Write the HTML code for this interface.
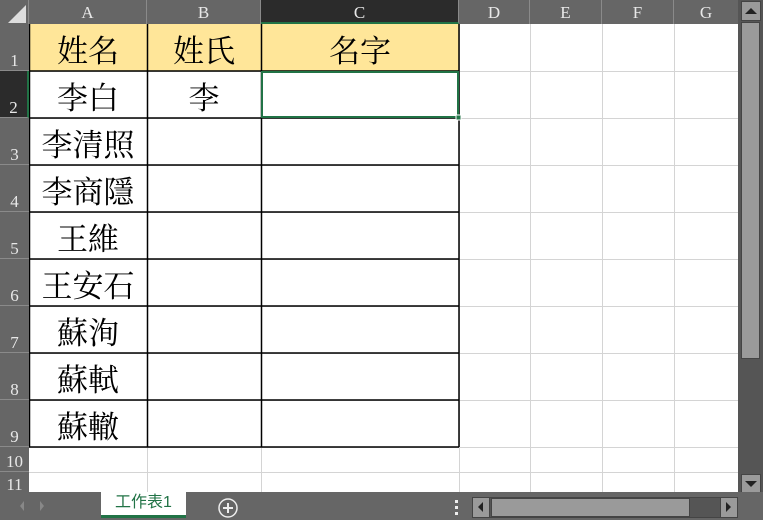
<!DOCTYPE html>
<html><head><meta charset="utf-8"><style>
*{margin:0;padding:0;box-sizing:border-box}
body{width:763px;height:520px;overflow:hidden;background:#666;position:relative;font-family:"Liberation Serif",serif}
.a{position:absolute}
.ch{position:absolute;top:0;height:24px;background:#666;color:#e8e8e8;font-size:17px;text-align:center;line-height:26px;border-right:1px solid #8a8a8a}
.rh{position:absolute;left:0;width:29px;background:#666;color:#e8e8e8;font-size:17px;text-align:center;border-bottom:1px solid #8a8a8a;display:flex;align-items:flex-end;justify-content:center;line-height:18px}
.t{position:absolute;font-family:"Noto Serif CJK SC","Noto Serif CJK TC",serif;font-size:31px;color:#000;text-align:center;line-height:49px;height:47px}
</style></head><body>
<div class="a" style="left:29px;top:24px;width:709px;height:468px;background:#fff"></div>
<svg class="a" style="left:0;top:0" width="763" height="520">
<g stroke="#d4d4d4" stroke-width="1">
<line x1="459.5" y1="24" x2="459.5" y2="492"/><line x1="530.5" y1="24" x2="530.5" y2="492"/><line x1="602.5" y1="24" x2="602.5" y2="492"/><line x1="674.5" y1="24" x2="674.5" y2="492"/>
<line x1="147.5" y1="447" x2="147.5" y2="492"/><line x1="261.5" y1="447" x2="261.5" y2="492"/>
<line x1="29" y1="71.5" x2="738" y2="71.5"/><line x1="29" y1="118.5" x2="738" y2="118.5"/><line x1="29" y1="165.5" x2="738" y2="165.5"/><line x1="29" y1="212.5" x2="738" y2="212.5"/><line x1="29" y1="259.5" x2="738" y2="259.5"/><line x1="29" y1="306.5" x2="738" y2="306.5"/><line x1="29" y1="353.5" x2="738" y2="353.5"/><line x1="29" y1="400.5" x2="738" y2="400.5"/><line x1="29" y1="447.5" x2="738" y2="447.5"/><line x1="29" y1="472.5" x2="738" y2="472.5"/>
</g>
<rect x="30" y="24" width="429" height="47" fill="#ffe699"/>
<g stroke="#000" stroke-width="1.5">
<line x1="29.5" y1="24" x2="29.5" y2="447"/><line x1="147.5" y1="24" x2="147.5" y2="447"/><line x1="261.5" y1="24" x2="261.5" y2="447"/><line x1="459" y1="24" x2="459" y2="447"/>
<line x1="29" y1="71" x2="459" y2="71"/><line x1="29" y1="118" x2="459" y2="118"/><line x1="29" y1="165" x2="459" y2="165"/><line x1="29" y1="212" x2="459" y2="212"/><line x1="29" y1="259" x2="459" y2="259"/><line x1="29" y1="306" x2="459" y2="306"/><line x1="29" y1="353" x2="459" y2="353"/><line x1="29" y1="400" x2="459" y2="400"/><line x1="29" y1="447" x2="459" y2="447"/>
</g>
<rect x="262" y="72" width="196" height="45" fill="none" stroke="#217346" stroke-width="2"/>
<rect x="456" y="115" width="5" height="5" fill="#217346" stroke="#fff" stroke-width="1"/>
</svg>
<div class="ch" style="left:0;width:29px"></div>
<svg class="a" style="left:8px;top:5px" width="18" height="18"><polygon points="18,0 18,18 0,18" fill="#ddd"/></svg>
<div class="ch" style="left:29px;width:118px">A</div>
<div class="ch" style="left:147px;width:114px">B</div>
<div class="ch" style="left:261px;width:198px;background:#2b2b2b;border-bottom:2px solid #217346">C</div>
<div class="ch" style="left:459px;width:71px">D</div>
<div class="ch" style="left:530px;width:72px">E</div>
<div class="ch" style="left:602px;width:72px">F</div>
<div class="ch" style="left:674px;width:64px;border-right:none">G</div>
<div class="rh" style="top:24px;height:47px">1</div>
<div class="rh" style="top:71px;height:47px;background:#2b2b2b;border-right:2px solid #217346">2</div>
<div class="rh" style="top:118px;height:47px">3</div>
<div class="rh" style="top:165px;height:47px">4</div>
<div class="rh" style="top:212px;height:47px">5</div>
<div class="rh" style="top:259px;height:47px">6</div>
<div class="rh" style="top:306px;height:47px">7</div>
<div class="rh" style="top:353px;height:47px">8</div>
<div class="rh" style="top:400px;height:47px">9</div>
<div class="rh" style="top:447px;height:25px">10</div>
<div class="rh" style="top:472px;height:20px;border-bottom:none;overflow:hidden;align-items:flex-start;padding-top:4px">11</div>
<div class="t" style="left:29px;top:24px;width:118px">姓名</div>
<div class="t" style="left:147px;top:24px;width:114px">姓氏</div>
<div class="t" style="left:261px;top:24px;width:198px">名字</div>
<div class="t" style="left:29px;top:71px;width:118px">李白</div>
<div class="t" style="left:147px;top:71px;width:114px">李</div>
<div class="t" style="left:29px;top:118px;width:118px">李清照</div>
<div class="t" style="left:29px;top:165px;width:118px">李商隱</div>
<div class="t" style="left:29px;top:212px;width:118px">王維</div>
<div class="t" style="left:29px;top:259px;width:118px">王安石</div>
<div class="t" style="left:29px;top:306px;width:118px">蘇洵</div>
<div class="t" style="left:29px;top:353px;width:118px">蘇軾</div>
<div class="t" style="left:29px;top:400px;width:118px">蘇轍</div>
<div class="a" style="left:738px;top:0;width:25px;height:492px;background:#555"></div>
<div class="a" style="left:741px;top:1px;width:20px;height:20px;background:#9a9a9a;border:1px solid #444"></div>
<svg class="a" style="left:745px;top:8px" width="12" height="6"><polygon points="6,0 12,6 0,6" fill="#222"/></svg>
<div class="a" style="left:741px;top:22px;width:19px;height:337px;background:#9a9a9a;border:1px solid #444"></div>
<div class="a" style="left:741px;top:474px;width:20px;height:19px;background:#9a9a9a;border:1px solid #444"></div>
<svg class="a" style="left:745px;top:481px" width="12" height="6"><polygon points="0,0 12,0 6,6" fill="#222"/></svg>
<div class="a" style="left:0;top:492px;width:763px;height:28px;background:#666"></div>
<svg class="a" style="left:18px;top:499px" width="30" height="14"><polygon points="6,2 2,7 6,12" fill="#888"/><polygon points="22,2 26,7 22,12" fill="#888"/></svg>
<div class="a" style="left:101px;top:492px;width:85px;height:26px;background:#fff;border-bottom:3px solid #217346;color:#217346;font-family:'Liberation Sans','Noto Sans CJK TC',sans-serif;font-size:16px;text-align:center;line-height:22px">工作表1</div>
<svg class="a" style="left:217px;top:497px" width="22" height="22"><circle cx="11" cy="11" r="9" fill="none" stroke="#eee" stroke-width="1.5"/><path d="M11 6V16M6 11H16" stroke="#eee" stroke-width="2"/></svg>
<svg class="a" style="left:454px;top:499px" width="6" height="18"><rect x="1" y="1" width="3" height="3" fill="#eee"/><rect x="1" y="7" width="3" height="3" fill="#eee"/><rect x="1" y="13" width="3" height="3" fill="#eee"/></svg>
<div class="a" style="left:472px;top:497px;width:266px;height:21px;background:#555;border:1px solid #444"></div>
<div class="a" style="left:473px;top:498px;width:17px;height:19px;background:#9a9a9a;border-right:1px solid #444"></div>
<svg class="a" style="left:478px;top:502px" width="6" height="10"><polygon points="5,0 5,10 0,5" fill="#222"/></svg>
<div class="a" style="left:491px;top:498px;width:199px;height:19px;background:#9a9a9a;border:1px solid #444"></div>
<div class="a" style="left:720px;top:498px;width:17px;height:19px;background:#9a9a9a;border-left:1px solid #444"></div>
<svg class="a" style="left:726px;top:502px" width="6" height="10"><polygon points="0,0 0,10 5,5" fill="#222"/></svg>
</body></html>
